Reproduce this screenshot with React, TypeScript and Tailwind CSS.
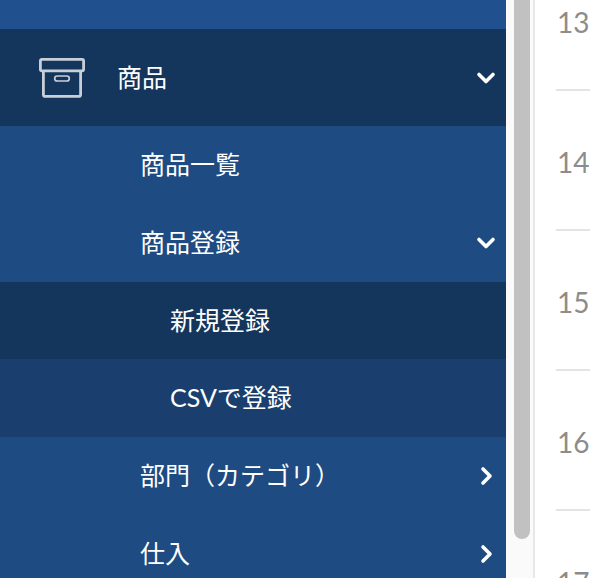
const jp = "font-['Lato','Noto_Sans_CJK_JP',sans-serif]";

function ArchiveIcon() {
  return (
    <svg width="46" height="40" viewBox="0 0 46 40" fill="none" stroke="#c9cfd8" strokeWidth="2.8" strokeLinejoin="round">
      <rect x="1.4" y="1.4" width="43.2" height="11.4" rx="1.5" />
      <path d="M4.4 12.8V36.4a2 2 0 0 0 2 2h33.2a2 2 0 0 0 2-2V12.8" />
      <rect x="15.7" y="18" width="14.6" height="5" rx="2.5" strokeWidth="1.7" />
    </svg>
  );
}

function ArrowDown() {
  return (
    <svg width="20" height="14" viewBox="0 0 20 14" fill="none" stroke="white" strokeWidth="3.6" strokeLinecap="round" strokeLinejoin="round">
      <path d="M3 3.5 10 10.5 17 3.5" />
    </svg>
  );
}

function ArrowRight() {
  return (
    <svg width="20" height="20" viewBox="0 0 20 20" fill="none" stroke="white" strokeWidth="3.6" strokeLinecap="round" strokeLinejoin="round">
      <path d="M7 3 14 10 7 17" />
    </svg>
  );
}

function Row({ label, indent, bg, height, arrow }: { label: string; indent: string; bg: string; height: string; arrow?: 'down' | 'right' }) {
  return (
    <div className={`flex items-center justify-between pr-[10px] ${indent} ${bg} ${height}`}>
      <span className="pb-[2px] text-[25px] leading-none text-white">{label}</span>
      {arrow === 'down' && <ArrowDown />}
      {arrow === 'right' && <ArrowRight />}
    </div>
  );
}

export default function App() {
  const hours = ['13', '14', '15', '16', '17'];

  return (
    <div className={`flex h-[578px] w-[590px] overflow-hidden bg-white ${jp}`}>
      <nav className="h-[578px] w-[506px] shrink-0 overflow-hidden bg-[#1e4b82]">
        <div className="h-[29px] bg-[#20518e]" />
        <div className="flex h-[97px] items-center justify-between bg-[#14365c] pr-[10px] pl-[39px]">
          <div className="flex items-center gap-[32px]">
            <ArchiveIcon />
            <span className="text-[25px] leading-none text-white">商品</span>
          </div>
          <ArrowDown />
        </div>
        <Row label="商品一覧" indent="pl-[140px]" bg="bg-[#1e4b82]" height="h-[78px]" />
        <Row label="商品登録" indent="pl-[140px]" bg="bg-[#1e4b82]" height="h-[78px]" arrow="down" />
        <Row label="新規登録" indent="pl-[170px]" bg="bg-[#14365c]" height="h-[77px] pt-[2px]" />
        <Row label="CSVで登録" indent="pl-[170px]" bg="bg-[#1a3f6e]" height="h-[78px]" />
        <Row label="部門（カテゴリ）" indent="pl-[140px]" bg="bg-[#1e4b82]" height="h-[78px]" arrow="right" />
        <Row label="仕入" indent="pl-[140px]" bg="bg-[#1e4b82]" height="h-[78px]" arrow="right" />
      </nav>

      <div className="h-full w-[29px] shrink-0 border-r-2 border-[#e8e8e8] bg-[#fafafa] pl-[8px]">
        <div className="h-[539px] w-[16px] rounded-b-[8px] bg-[#c1c1c1]" />
      </div>

      <div className="min-w-0 flex-1 pl-[21px]">
        {hours.map((h, i) => (
          <div key={h} className={`h-[140px] ${i === 0 ? '-mt-[49px]' : ''} border-b-2 border-[#e4e4e4]`}>
            <div className="pt-[56px] pl-[1px] text-[28px] leading-[30px] text-[#8c8c8c]">{h}</div>
          </div>
        ))}
      </div>
    </div>
  );
}
